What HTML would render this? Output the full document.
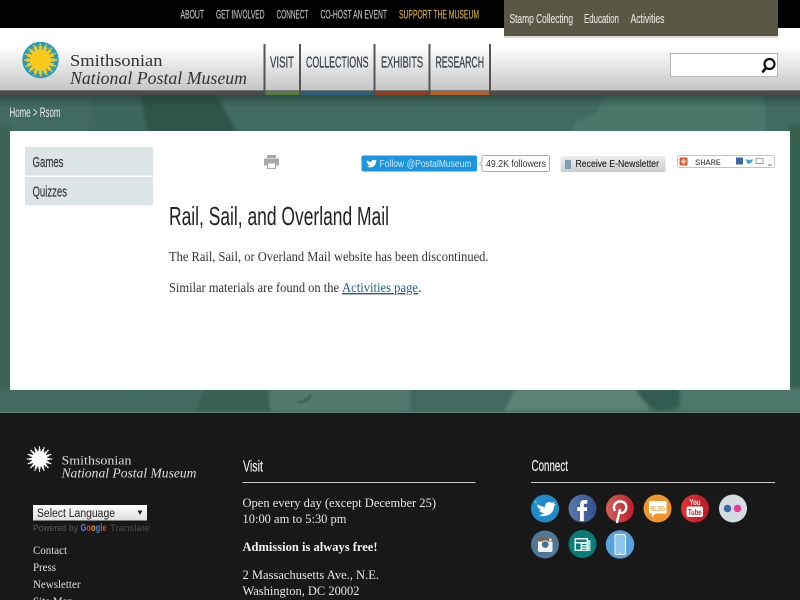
<!DOCTYPE html>
<html><head><meta charset="utf-8"><title>Rail, Sail, and Overland Mail</title>
<style>
html,body{margin:0;padding:0;width:800px;height:600px;overflow:hidden;background:#181818}
svg{display:block;position:absolute;left:0;top:0}
.n{font-family:"Liberation Sans",sans-serif}
.s{font-family:"Liberation Serif",serif}
</style></head><body>
<svg width="800" height="600" viewBox="0 0 800 600" xmlns="http://www.w3.org/2000/svg">
<defs>
<filter id="bl" x="-5%" y="-20%" width="110%" height="140%"><feGaussianBlur stdDeviation="1.5"/></filter>
<linearGradient id="hd" x1="0" y1="0" x2="0" y2="1"><stop offset="0" stop-color="#fff"/><stop offset=".3" stop-color="#fff"/><stop offset="1" stop-color="#c6c6c6"/></linearGradient>
<linearGradient id="sh" x1="0" y1="0" x2="0" y2="1"><stop offset="0" stop-color="#1d3a33" stop-opacity=".6"/><stop offset="1" stop-color="#1d3a33" stop-opacity="0"/></linearGradient>
<linearGradient id="sel" x1="0" y1="0" x2="0" y2="1"><stop offset="0" stop-color="#fff"/><stop offset="1" stop-color="#ddd"/></linearGradient>
<linearGradient id="btn" x1="0" y1="0" x2="0" y2="1"><stop offset="0" stop-color="#eee"/><stop offset="1" stop-color="#ccc"/></linearGradient>
<linearGradient id="pin" x1="0" y1="0" x2="1" y2="0"><stop offset="0" stop-color="#d2605a"/><stop offset="1" stop-color="#bd1f2b"/></linearGradient>
<linearGradient id="fb" x1="0" y1="0" x2="1" y2="0"><stop offset="0" stop-color="#5a78ad"/><stop offset="1" stop-color="#34508f"/></linearGradient>
<linearGradient id="yt" x1="0" y1="0" x2="1" y2="0"><stop offset="0" stop-color="#e92f33"/><stop offset="1" stop-color="#b91c28"/></linearGradient>
</defs>

<!-- photographic background -->
<rect x="0" y="95" width="800" height="318" fill="#416a60"/>
<g filter="url(#bl)">
<path d="M92 92L140 92L150 135L88 135Z" fill="#3d665b"/>
<path d="M140 92H215L238 135H148Z" fill="#2e5449"/>
<path d="M570 135L575 122L596 114L606 92H765V135Z" fill="#4c776b"/>
<rect x="-5" y="125" width="16" height="270" fill="#3a6359"/>
<rect x="789" y="125" width="16" height="270" fill="#35604f"/>
<path d="M-5 388H805V411H-5Z" fill="#43695f"/>
<path d="M130 388H205L200 411H125Z" fill="#3f6a5e"/>
<path d="M205 388H266L270 411H196Z" fill="#375e53"/>
<path d="M270 388H410V411H270Z" fill="#53786e"/>
<path d="M410 388H512L502 411H410Z" fill="#42695e"/>
<path d="M516 388H640L650 411H504Z" fill="#598376"/>
<path d="M636 388H686C686 403 680 408 660 411C650 408 640 400 636 388Z" fill="#335c51"/>
<path d="M680 388H805V411H680Z" fill="#4e786c"/>
</g>
<path d="M296 402c6-2 12-5 15-9c2 5-2 10-10 11z" fill="#3f6459" opacity=".8"/>
<rect x="0" y="95" width="800" height="12" fill="url(#sh)"/>
<rect x="0" y="412" width="800" height="1" fill="#5e8277"/>

<!-- top bar -->
<rect x="0" y="0" width="800" height="28" fill="#000"/>
<g class="n" font-size="11.500" fill="#c4c4c4" stroke="#c4c4c4" stroke-width=".15">
<text x="180.500" y="18.500" textLength="23.500" lengthAdjust="spacingAndGlyphs">ABOUT</text>
<text x="216" y="18.500" textLength="48.500" lengthAdjust="spacingAndGlyphs">GET INVOLVED</text>
<text x="276.500" y="18.500" textLength="32" lengthAdjust="spacingAndGlyphs">CONNECT</text>
<text x="320.500" y="18.500" textLength="66.500" lengthAdjust="spacingAndGlyphs">CO-HOST AN EVENT</text>
<text x="399" y="18.500" textLength="80" lengthAdjust="spacingAndGlyphs" fill="#d9b42e" stroke="#d9b42e">SUPPORT THE MUSEUM</text>
</g>

<!-- header -->
<rect x="0" y="28" width="800" height="62" fill="url(#hd)"/>
<rect x="0" y="90" width="800" height="5" fill="#4c4c4c"/>
<rect x="0" y="90" width="800" height="1" fill="#777"/>

<!-- olive dropdown -->
<rect x="504" y="1" width="274" height="37" fill="#000" opacity=".15"/>
<rect x="504" y="0" width="274" height="36" fill="#5a5845"/>
<g class="n" font-size="13" fill="#e6e6de" stroke="#e6e6de" stroke-width=".12">
<text x="509.500" y="23" textLength="63.500" lengthAdjust="spacingAndGlyphs">Stamp Collecting</text>
<text x="584" y="23" textLength="35" lengthAdjust="spacingAndGlyphs">Education</text>
<text x="630.500" y="23" textLength="34" lengthAdjust="spacingAndGlyphs">Activities</text>
</g>

<!-- logo -->
<circle cx="40.500" cy="60" r="18.200" fill="#2a9dbd"/>
<circle cx="40.500" cy="60" r="10.500" fill="#f9c91e"/>
<circle cx="40.500" cy="60" r="12" fill="none" stroke="#f9c91e" stroke-width="4" pathLength="160" stroke-dasharray="7 3" stroke-dashoffset="3.500"/>
<circle cx="40.500" cy="60" r="15" fill="none" stroke="#f9c91e" stroke-width="3" pathLength="160" stroke-dasharray="2.500 7.500" stroke-dashoffset="1.250"/>
<text class="s" x="70" y="66" font-size="16.500" fill="#333" textLength="92.500" lengthAdjust="spacingAndGlyphs">Smithsonian</text>
<text class="s" x="70" y="84" font-size="18" font-style="italic" fill="#333" textLength="177" lengthAdjust="spacingAndGlyphs">National Postal Museum</text>

<!-- main nav -->
<g fill="#555">
<rect x="263.500" y="44" width="2" height="48"/><rect x="299" y="44" width="2" height="48"/><rect x="373.500" y="44" width="2" height="48"/><rect x="428.500" y="44" width="2" height="48"/><rect x="489" y="44" width="2" height="48"/>
</g>
<rect x="265.500" y="91" width="33.500" height="4" fill="#587a42"/>
<rect x="301" y="91" width="72.500" height="4" fill="#2a6078"/>
<rect x="375.500" y="91" width="53" height="4" fill="#8f3e1f"/>
<rect x="430.500" y="91" width="58.500" height="4" fill="#b5622a"/>
<g class="n" font-size="16" fill="#3b444a" stroke="#3b444a" stroke-width=".3">
<text x="270" y="67.500" textLength="24" lengthAdjust="spacingAndGlyphs">VISIT</text>
<text x="306" y="67.500" textLength="62.500" lengthAdjust="spacingAndGlyphs">COLLECTIONS</text>
<text x="381" y="67.500" textLength="42" lengthAdjust="spacingAndGlyphs">EXHIBITS</text>
<text x="435.500" y="67.500" textLength="48.500" lengthAdjust="spacingAndGlyphs">RESEARCH</text>
</g>

<!-- search -->
<rect x="670.500" y="53.500" width="107" height="23" fill="#fff" stroke="#b5b5b5"/>
<circle cx="769.500" cy="64" r="5" fill="none" stroke="#111" stroke-width="2.200"/>
<path d="M766 68L763 71.500" stroke="#111" stroke-width="2.600" stroke-linecap="round"/>

<!-- breadcrumb -->
<text class="n" x="9.500" y="117" font-size="13.500" fill="#e5ece9" textLength="51" lengthAdjust="spacingAndGlyphs">Home &gt; Rsom</text>

<!-- panel -->
<rect x="10" y="131" width="780" height="259" fill="#fff"/>
<rect x="25" y="147" width="128" height="28.500" fill="#dde4e6"/>
<rect x="25" y="177" width="128" height="28.500" fill="#dde4e6"/>
<g class="n" font-size="15" fill="#333" stroke="#333" stroke-width=".15">
<text x="32.500" y="167" textLength="31" lengthAdjust="spacingAndGlyphs">Games</text>
<text x="32.500" y="196.500" textLength="34.500" lengthAdjust="spacingAndGlyphs">Quizzes</text>
</g>

<!-- print icon -->
<g fill="#a8a8a8">
<rect x="267" y="155" width="9" height="3"/>
<path d="M264 158.500h15v7h-3v-3h-9v3h-3z"/>
<rect x="267.500" y="163" width="8" height="5.500" fill="#fff" stroke="#a8a8a8" stroke-width="1"/>
</g>

<!-- twitter -->
<rect x="361.500" y="155.500" width="115.500" height="16" rx="2" fill="#1b95e0"/>
<path d="M367 160.500c1.500 1 3 1.600 4.500 1.600c-.3-2 2-3.200 3.500-1.800l1.500-.5-.8 1.300 1.200-.3-1 1.200c0 4-4.500 7-9 4.500 1.300 0 2.300-.3 3-1-1.200 0-2-.7-2.300-1.500h1c-1.200-.4-1.900-1.300-1.900-2.400l1 .3c-1-.7-1.200-1.600-.7-2.400z" fill="#fff"/>
<text class="n" x="379.500" y="167" font-size="10.500" fill="#cfe8f9" textLength="92" lengthAdjust="spacingAndGlyphs">Follow @PostalMuseum</text>
<rect x="482" y="155.500" width="67.500" height="16" rx="2" fill="#fff" stroke="#aaa"/>
<path d="M482.500 161l-3 2.500 3 2.500" fill="#fff" stroke="#aaa"/>
<text class="n" x="486" y="167" font-size="10.500" fill="#333" textLength="60" lengthAdjust="spacingAndGlyphs">49.2K followers</text>

<!-- newsletter -->
<rect x="560.500" y="156" width="105" height="16" rx="2" fill="url(#btn)"/>
<rect x="565" y="160" width="6" height="9" fill="#7d9fb5"/>
<text class="n" x="575.500" y="167" font-size="10.500" fill="#222" stroke="#222" stroke-width=".12" textLength="83.500" lengthAdjust="spacingAndGlyphs">Receive E-Newsletter</text>

<!-- share -->
<rect x="677.500" y="155.500" width="97" height="12" rx="2" fill="#fff" stroke="#c4c4c4"/>
<rect x="679.500" y="157.500" width="8" height="8" rx="1" fill="#e8542c"/>
<path d="M683.500 159v5M681 161.500h5" stroke="#fff" stroke-width="1.500"/>
<text x="695" y="165" font-family="'Liberation Mono',monospace" font-size="8" fill="#333" textLength="26" lengthAdjust="spacingAndGlyphs">SHARE</text>
<rect x="736" y="157.500" width="7" height="7" fill="#3b6aa6"/>
<path d="M746 159c2 1 5 1 7 0l-1 3-3 2-2-1z" fill="#38a6dc"/>
<rect x="756" y="158.500" width="7" height="5" fill="none" stroke="#888" stroke-width=".8"/>
<path d="M768 165h4" stroke="#777"/>

<!-- content -->
<text class="n" x="169" y="225" font-size="26" fill="#222" textLength="220" lengthAdjust="spacingAndGlyphs">Rail, Sail, and Overland Mail</text>
<text class="s" x="169" y="261" font-size="14" fill="#333" textLength="319.500" lengthAdjust="spacingAndGlyphs">The Rail, Sail, or Overland Mail website has been discontinued.</text>
<text class="s" x="169" y="292" font-size="14" fill="#333" textLength="170" lengthAdjust="spacingAndGlyphs">Similar materials are found on the</text>
<text class="s" x="342" y="292" font-size="14" fill="#1f5f8b" text-decoration="underline" textLength="76" lengthAdjust="spacingAndGlyphs">Activities page</text>
<text class="s" x="418" y="292" font-size="14" fill="#333">.</text>

<!-- footer -->
<rect x="0" y="413" width="800" height="187" fill="#181818"/>
<circle cx="39.500" cy="459" r="8" fill="#fff"/>
<circle cx="39.500" cy="459" r="9" fill="none" stroke="#fff" stroke-width="2.500" pathLength="160" stroke-dasharray="6 4" stroke-dashoffset="3"/>
<circle cx="39.500" cy="459" r="11.500" fill="none" stroke="#fff" stroke-width="2.500" pathLength="160" stroke-dasharray="2.500 7.500" stroke-dashoffset="1.250"/>
<text class="s" x="61.500" y="464.500" font-size="13" fill="#ddd" textLength="70" lengthAdjust="spacingAndGlyphs">Smithsonian</text>
<text class="s" x="61.500" y="477.500" font-size="14" font-style="italic" fill="#ddd" textLength="135" lengthAdjust="spacingAndGlyphs">National Postal Museum</text>

<rect x="33" y="505" width="114" height="15.500" fill="url(#sel)"/>
<text class="n" x="37" y="517" font-size="11.500" fill="#222" textLength="78" lengthAdjust="spacingAndGlyphs">Select Language</text>
<path d="M137.500 510.500h5l-2.500 4.500z" fill="#222"/>
<text class="n" x="33" y="531" font-size="9.500" fill="#5c5c5c" textLength="45" lengthAdjust="spacingAndGlyphs">Powered by</text>
<text class="n" x="80.500" y="531" font-size="10" font-weight="bold" textLength="26" lengthAdjust="spacingAndGlyphs"><tspan fill="#4a7de0">G</tspan><tspan fill="#d8432f">o</tspan><tspan fill="#e0a92a">o</tspan><tspan fill="#4a7de0">g</tspan><tspan fill="#3b9a4a">l</tspan><tspan fill="#d8432f">e</tspan></text>
<text class="n" x="110" y="531" font-size="9.500" fill="#4c4c4c" textLength="40" lengthAdjust="spacingAndGlyphs">Translate</text>

<g class="s" font-size="12" fill="#dcdcdc">
<text x="33" y="554" textLength="34" lengthAdjust="spacingAndGlyphs">Contact</text>
<text x="33" y="571" textLength="23" lengthAdjust="spacingAndGlyphs">Press</text>
<text x="33" y="588" textLength="47.500" lengthAdjust="spacingAndGlyphs">Newsletter</text>
<text x="33" y="605" textLength="40" lengthAdjust="spacingAndGlyphs">Site Map</text>
</g>

<text class="n" x="243" y="471.500" font-size="16" fill="#eee" stroke="#eee" stroke-width=".15" textLength="20" lengthAdjust="spacingAndGlyphs">Visit</text>
<rect x="242.500" y="482" width="233" height="1" fill="#ccc"/>
<g class="s" font-size="13" fill="#e6e6e6">
<text x="242.500" y="507" textLength="193.500" lengthAdjust="spacingAndGlyphs">Open every day (except December 25)</text>
<text x="242.500" y="523" textLength="104" lengthAdjust="spacingAndGlyphs">10:00 am to 5:30 pm</text>
<text x="242.500" y="551" font-weight="bold" fill="#f2f2f2" textLength="135" lengthAdjust="spacingAndGlyphs">Admission is always free!</text>
<text x="242.500" y="579" textLength="136.500" lengthAdjust="spacingAndGlyphs">2 Massachusetts Ave., N.E.</text>
<text x="242.500" y="595" textLength="117" lengthAdjust="spacingAndGlyphs">Washington, DC 20002</text>
</g>

<text class="n" x="531.500" y="471" font-size="15.500" fill="#eee" stroke="#eee" stroke-width=".15" textLength="36.500" lengthAdjust="spacingAndGlyphs">Connect</text>
<rect x="531" y="482" width="244" height="1" fill="#ccc"/>

<!-- social icons -->
<circle cx="545" cy="508.500" r="14" fill="#1f8bc9"/>
<path d="M535 502c3 3 6 4.500 10 5c-.5-4 4-6.500 7-4l3-1-1.500 2.500 2.500-.5-2 2.500c0 7-8 12-15.500 8.500 2.500 0 4.500-.8 5.500-2-2.500-.2-4-1-5-3 1 .2 1.500.1 2.500-.2-3-1-4-2.500-4.500-4.500l2 .5c-2.500-1.500-3.500-3.500-2.500-5.300z" fill="#fff"/>

<circle cx="582.500" cy="508.500" r="14" fill="url(#fb)"/>
<path d="M580 521v-10h-2.800v-3.700h2.800v-2.800c0-3 1.800-4.500 4.500-4.500h2.800v3.600h-2c-1 0-1.500.5-1.500 1.500v2.200h3.500l-.5 3.700h-3v10z" fill="#fff"/>

<circle cx="620" cy="508.500" r="14" fill="url(#pin)"/>
<path d="M617 522l2.800-12M614.500 510c-2-5 2-9 6.500-8.500 4 .4 6 3.500 5 7.500-1 3.500-4.500 5-6.500 3" fill="none" stroke="#fff" stroke-width="2.400" stroke-linecap="round"/>

<circle cx="657.500" cy="508.500" r="14" fill="#f0962a"/>
<path d="M649 501h17.500v12.500h-11l-3.500 4v-4h-3z" fill="#fff"/>
<text class="n" x="651" y="511" font-size="7.500" font-weight="bold" fill="#efa23c" textLength="14" lengthAdjust="spacingAndGlyphs">BLOG</text>

<circle cx="695" cy="508.500" r="14" fill="url(#yt)"/>
<text class="n" x="689.500" y="505" font-size="8" font-weight="bold" fill="#fff" textLength="11" lengthAdjust="spacingAndGlyphs">You</text>
<rect x="686.500" y="506.500" width="16.500" height="10.500" rx="2" fill="#fff"/>
<text class="n" x="688" y="515" font-size="8.500" font-weight="bold" fill="#c4202b" textLength="13.500" lengthAdjust="spacingAndGlyphs">Tube</text>

<circle cx="733" cy="508.500" r="14" fill="#d5dde0"/>
<circle cx="727.500" cy="508.500" r="3.800" fill="#3f66b0"/>
<circle cx="737.500" cy="508.500" r="3.800" fill="#e83a92"/>

<circle cx="545" cy="544.500" r="14" fill="#4f7898"/>
<rect x="538" y="537.500" width="14.500" height="14.500" rx="1.500" fill="#f2f2f2"/>
<rect x="538" y="537.500" width="14.500" height="4" fill="#7a6450"/>
<circle cx="545.200" cy="544.500" r="3.800" fill="#4a6f90" stroke="#dfe4e8"/>
<rect x="549" y="538.500" width="2.500" height="2.500" fill="#cfe0ea"/>

<circle cx="582.500" cy="544" r="14" fill="#0a7c76"/>
<rect x="574.500" y="538" width="13.500" height="13" fill="#e8f3f1"/>
<rect x="588" y="540" width="2.500" height="11" fill="#bcdcd8"/>
<rect x="576" y="539.500" width="10.500" height="2.500" fill="#0a7c76"/>
<rect x="576" y="543.500" width="4.500" height="6" fill="#0a7c76"/>
<path d="M582 544.500h4.500M582 547h4.500M582 549.300h4.500" stroke="#0a7c76" stroke-width=".9"/>

<circle cx="620" cy="544.500" r="14.200" fill="#5aa2dc"/>
<rect x="615" y="534.500" width="10.500" height="20" rx="1.500" fill="#8cc6f0" stroke="#e8f4fc" stroke-width="1.100"/>
<rect x="619.500" y="552.500" width="1.500" height="1" fill="#fff"/>
</svg>
</body></html>
